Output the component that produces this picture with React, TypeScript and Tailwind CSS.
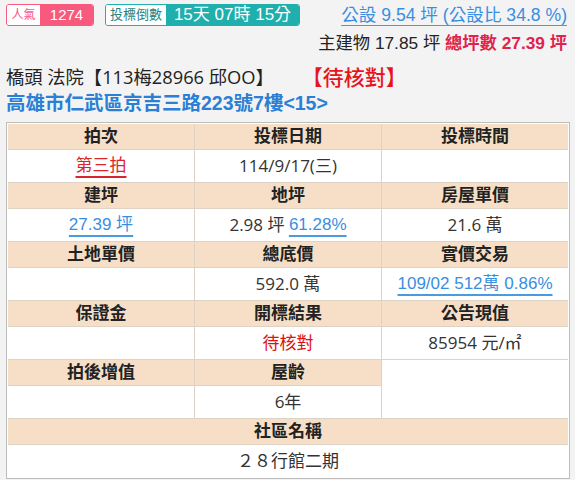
import React from "react";

const H = ({ children, className = "" }: { children?: React.ReactNode; className?: string }) => (
  <div
    className={
      "h-[25px] bg-[#f6dfc6] flex items-center justify-center text-[17px] font-bold text-[#222] font-['Liberation_Sans','Noto_Sans_CJK_TC',sans-serif] " +
      className
    }
  >
    {children}
  </div>
);

const D = ({ children, className = "" }: { children?: React.ReactNode; className?: string }) => (
  <div
    className={
      "h-[32px] bg-white flex items-center justify-center text-[17px] text-[#333] font-['Open_Sans','Noto_Sans_CJK_TC',sans-serif] " +
      className
    }
  >
    {children}
  </div>
);

const Link = ({ children, red = false }: { children: React.ReactNode; red?: boolean }) => (
  <span
    className={
      "underline decoration-2 underline-offset-[5px] font-['Liberation_Sans','Noto_Sans_CJK_TC',sans-serif] " +
      (red ? "text-[#d9262e] decoration-[#d9262e]" : "text-[#3a8ee0] decoration-[#4a9ae0]")
    }
  >
    {children}
  </span>
);

export default function App() {
  return (
    <div className="w-[575px] h-[480px] overflow-hidden bg-[#f3f3f3] font-['Liberation_Sans','Noto_Sans_CJK_TC',sans-serif]">
      <div className="pt-[4px] pl-[6px] pr-[8px]">
        <div className="flex h-[22px] items-center justify-between">
          <div className="flex items-center gap-[11px]">
            <div className="flex h-[22px] w-[88px] rounded-[3px] border border-[#f75a7d] overflow-hidden">
              <div className="w-[33px] bg-white flex items-center justify-center text-[12px] text-[#f75a7d]">人氣</div>
              <div className="flex-1 bg-[#f75a7d] flex items-center justify-center text-[15px] text-white">1274</div>
            </div>
            <div className="flex h-[22px] w-[195px] rounded-[3px] border border-[#1fb0ad] overflow-hidden">
              <div className="w-[60px] bg-white flex items-center justify-center text-[13px] text-[#2a7f7f]">投標倒數</div>
              <div className="flex-1 bg-[#1fb0ad] flex items-center justify-center text-[17px] text-white whitespace-nowrap">15天 07時 15分</div>
            </div>
          </div>
          <div className="text-[17.6px] text-[#3a8ee0] underline decoration-[#4a9ae0] underline-offset-[4px] whitespace-nowrap">
            公設 9.54 坪 (公設比 34.8 %)
          </div>
        </div>
        <div className="mt-[6px] flex h-[24px] items-center justify-end text-[17.3px] text-[#222] whitespace-nowrap">
          主建物 17.85 坪&nbsp;<span className="font-bold text-[#e0234e]">總坪數 27.39 坪</span>
        </div>
        <div className="mt-[8px] flex h-[26px] items-center text-[18.3px] text-[#222] whitespace-nowrap font-['Open_Sans','Noto_Sans_CJK_TC',sans-serif]">
          <span>橋頭 法院【113梅28966 邱OO】</span>
          <span className="ml-[28px] text-[21px] font-medium text-[#e8141c] font-['Noto_Sans_CJK_TC',sans-serif]">【待核對】</span>
        </div>
        <div className="mt-[1px] flex h-[26px] items-center text-[19.5px] font-bold text-[#2b7fd4] whitespace-nowrap">
          高雄市仁武區京吉三路223號7樓&lt;15&gt;
        </div>
      </div>
      <div className="mt-[5px] ml-[6px] w-[564px] border border-[#bdbdbd] bg-white p-px">
        <div className="grid grid-cols-3 gap-px bg-[#ddd3c5]">
          <H>拍次</H>
          <H>投標日期</H>
          <H>投標時間</H>
          <D><Link red>第三拍</Link></D>
          <D>114/9/17(三)</D>
          <D></D>

          <H>建坪</H>
          <H>地坪</H>
          <H>房屋單價</H>
          <D><Link>27.39 坪</Link></D>
          <D>2.98 坪&nbsp;<Link>61.28%</Link></D>
          <D>21.6 萬</D>

          <H>土地單價</H>
          <H>總底價</H>
          <H>實價交易</H>
          <D></D>
          <D>592.0 萬</D>
          <D><Link>109/02 512萬 0.86%</Link></D>

          <H>保證金</H>
          <H>開標結果</H>
          <H>公告現值</H>
          <D></D>
          <D className="text-[#e01010]">待核對</D>
          <D>85954 元/㎡</D>

          <H>拍後增值</H>
          <H>屋齡</H>
          <div className="row-span-2 bg-white"></div>
          <D></D>
          <D>6年</D>

          <H className="col-span-3">社區名稱</H>
          <D className="col-span-3">２８行館二期</D>
        </div>
      </div>
    </div>
  );
}
